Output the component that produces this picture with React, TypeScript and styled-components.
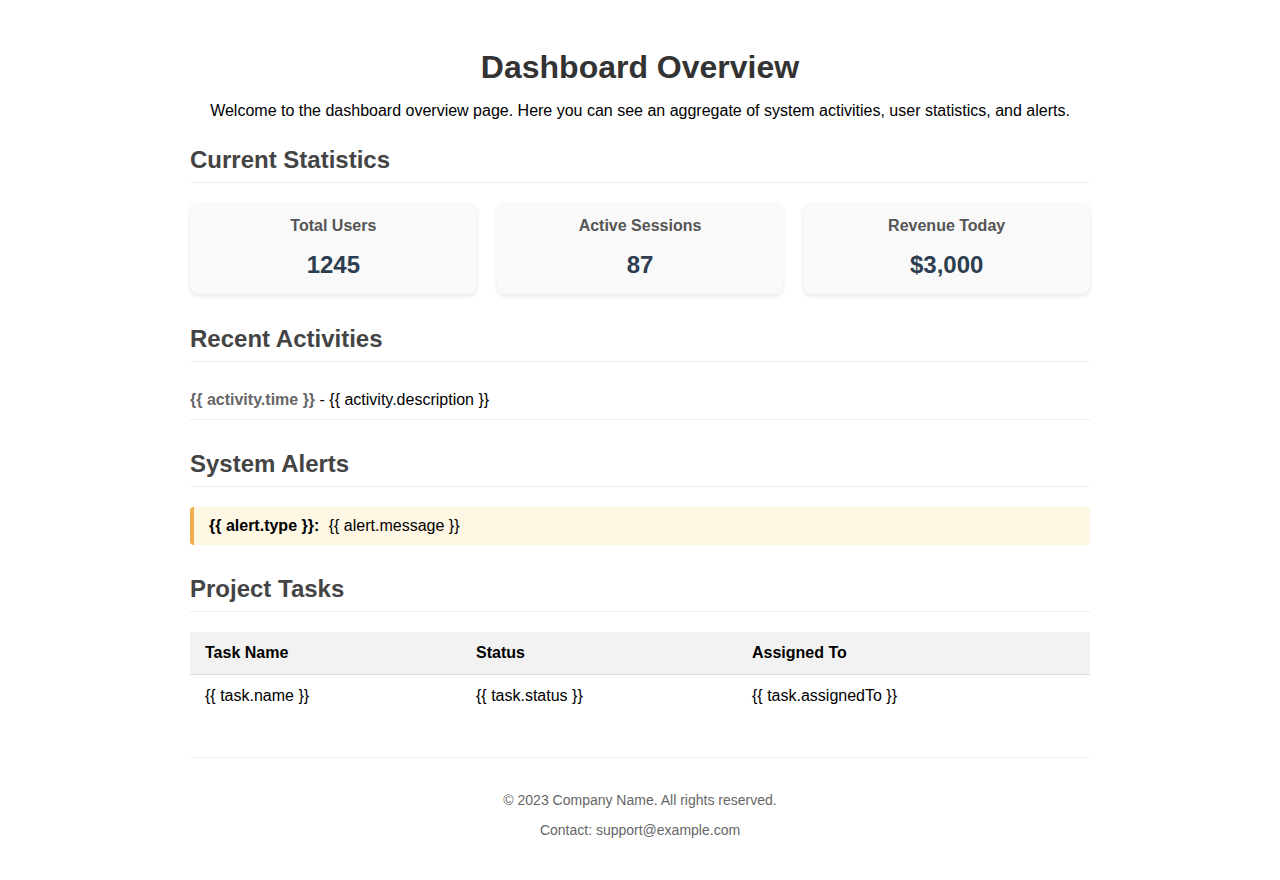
import React from "react";
import styled, { createGlobalStyle } from "styled-components";

const GlobalStyle = createGlobalStyle`
  html, body { margin: 0; padding: 0; background: #fff; }
  body { font-family: "Liberation Sans", Arial, sans-serif; color: #000; }
  * { box-sizing: border-box; }
`;

const Page = styled.div`
  max-width: 900px;
  margin: 0 auto;
  padding: 28px 0 20px;
`;

const Title = styled.h1`
  font-size: 32px;
  font-weight: bold;
  color: #333;
  text-align: center;
  margin: 21px 0 16px;
`;

const Intro = styled.p`
  font-size: 16px;
  text-align: center;
  margin: 0 0 26px;
`;

const Section = styled.section<{ $gap?: number }>`
  margin-bottom: ${(p) => p.$gap ?? 30}px;
`;

const SectionTitle = styled.h2`
  font-size: 24px;
  font-weight: bold;
  color: #444;
  margin: 0 0 20px;
  padding-bottom: 8px;
  border-bottom: 1px solid #eee;
`;

const StatGrid = styled.div`
  display: grid;
  grid-template-columns: repeat(3, 1fr);
  gap: 20px;
`;

const StatCard = styled.div`
  background: #f9f9f9;
  border-radius: 8px;
  box-shadow: 0 2px 4px rgba(0, 0, 0, 0.1);
  padding: 14px 15px 15px;
  text-align: center;
`;

const StatLabel = styled.h3`
  font-size: 16px;
  font-weight: bold;
  color: #555;
  margin: 0 0 16px;
`;

const StatValue = styled.p`
  font-size: 24px;
  font-weight: bold;
  color: #2c3e50;
  margin: 0;
`;

const ActivityList = styled.ul`
  list-style: none;
  margin: -1px 0 0;
  padding: 0;
`;

const ActivityItem = styled.li`
  font-size: 16px;
  padding: 10px 0;
  border-bottom: 1px solid #eee;
`;

const ActivityTime = styled.span`
  font-weight: bold;
  color: #666;
`;

const Alert = styled.div`
  background: #fdf7e3;
  border-left: 4px solid #f0ad4e;
  border-radius: 4px;
  padding: 10px 15px;
  font-size: 16px;
`;

const AlertType = styled.strong`
  margin-right: 5px;
`;

const Table = styled.table`
  width: 100%;
  border-collapse: collapse;
  font-size: 16px;
`;

const HeadCell = styled.th<{ $w?: number }>`
  background: #f2f2f2;
  text-align: left;
  font-weight: bold;
  padding: 12px 15px;
  border-bottom: 1px solid #ddd;
  width: ${(p) => (p.$w ? `${p.$w}px` : "auto")};
`;

const Cell = styled.td`
  padding: 12px 15px;
  text-align: left;
`;

const Footer = styled.footer`
  margin-top: 40px;
  padding-top: 20px;
  border-top: 1px solid #eee;
  text-align: center;
  font-size: 14px;
  color: #666;
`;

const FooterLine = styled.p`
  margin: 14px 0;
`;

export default function App() {
  return (
    <>
      <GlobalStyle />
      <Page>
        <Title>Dashboard Overview</Title>
        <Intro>
          Welcome to the dashboard overview page. Here you can see an aggregate of system activities, user
          statistics, and alerts.
        </Intro>

        <Section $gap={31}>
          <SectionTitle>Current Statistics</SectionTitle>
          <StatGrid>
            <StatCard>
              <StatLabel>Total Users</StatLabel>
              <StatValue>1245</StatValue>
            </StatCard>
            <StatCard>
              <StatLabel>Active Sessions</StatLabel>
              <StatValue>87</StatValue>
            </StatCard>
            <StatCard>
              <StatLabel>Revenue Today</StatLabel>
              <StatValue>$3,000</StatValue>
            </StatCard>
          </StatGrid>
        </Section>

        <Section $gap={30}>
          <SectionTitle>Recent Activities</SectionTitle>
          <ActivityList>
            <ActivityItem>
              <ActivityTime>{"{{ activity.time }}"}</ActivityTime> - {"{{ activity.description }}"}
            </ActivityItem>
          </ActivityList>
        </Section>

        <Section>
          <SectionTitle>System Alerts</SectionTitle>
          <Alert>
            <AlertType>{"{{ alert.type }}:"}</AlertType> {"{{ alert.message }}"}
          </Alert>
        </Section>

        <Section>
          <SectionTitle>Project Tasks</SectionTitle>
          <Table>
            <thead>
              <tr>
                <HeadCell $w={271}>Task Name</HeadCell>
                <HeadCell $w={276}>Status</HeadCell>
                <HeadCell>Assigned To</HeadCell>
              </tr>
            </thead>
            <tbody>
              <tr>
                <Cell>{"{{ task.name }}"}</Cell>
                <Cell>{"{{ task.status }}"}</Cell>
                <Cell>{"{{ task.assignedTo }}"}</Cell>
              </tr>
            </tbody>
          </Table>
        </Section>

        <Footer>
          <FooterLine>© 2023 Company Name. All rights reserved.</FooterLine>
          <FooterLine>Contact: support@example.com</FooterLine>
        </Footer>
      </Page>
    </>
  );
}
